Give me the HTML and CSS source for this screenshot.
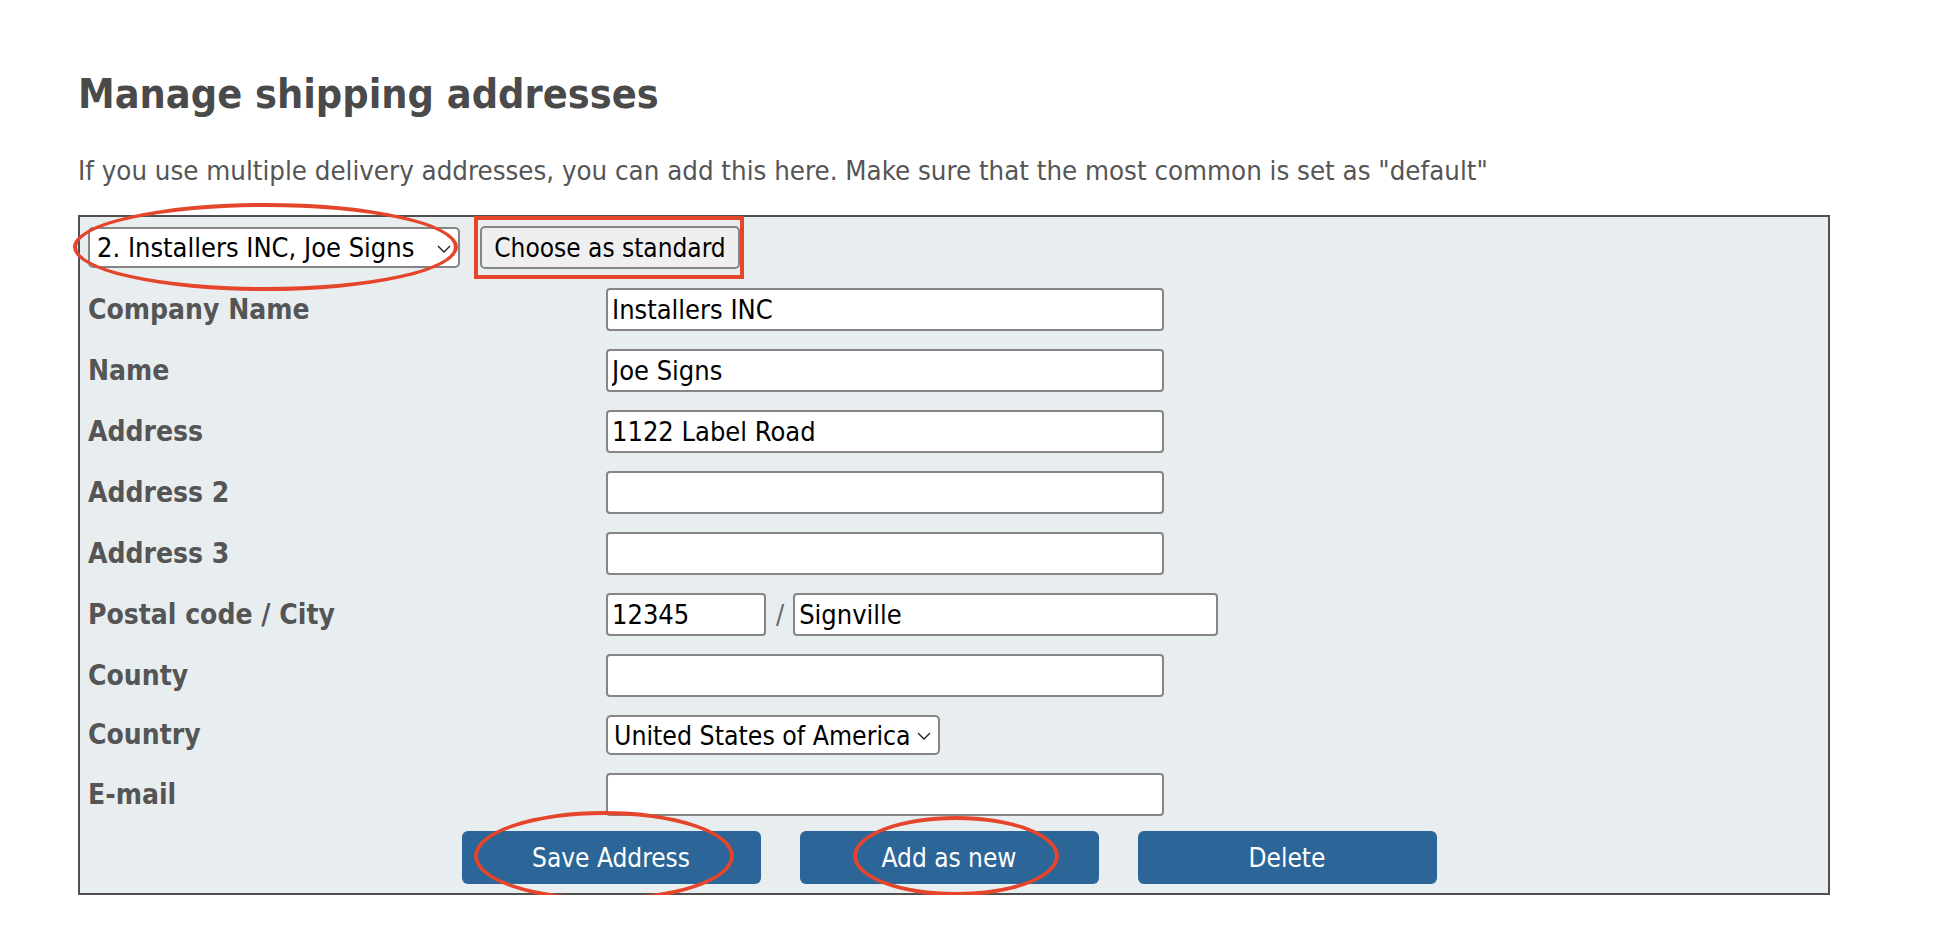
FILE: index.html
```html
<!DOCTYPE html>
<html lang="en">
<head>
<meta charset="utf-8">
<title>Manage shipping addresses</title>
<link rel="stylesheet" href="styles.css">
</head>
<body>
<div class="page">
  <h1 class="title">Manage shipping addresses</h1>
  <p class="intro">If you use multiple delivery addresses, you can add this here. Make sure that the most common is set as "default"</p>
  <form class="panel">
    <div class="toolbar">
      <div class="select-wrap select-address">
        <select class="select"><option>2. Installers INC, Joe Signs</option></select>
        <svg class="chev" viewBox="0 0 14 8" width="14" height="8"><path d="M1 1 L7 7 L13 1" fill="none" stroke="#222" stroke-width="1.4"/></svg>
      </div>
      <button type="button" class="btn-std">Choose as standard</button>
    </div>
    <div class="fields">
      <label class="lbl">Company Name</label>
      <div class="ctl"><input class="txt" type="text" value="Installers INC"></div>
      <label class="lbl">Name</label>
      <div class="ctl"><input class="txt" type="text" value="Joe Signs"></div>
      <label class="lbl">Address</label>
      <div class="ctl"><input class="txt" type="text" value="1122 Label Road"></div>
      <label class="lbl">Address 2</label>
      <div class="ctl"><input class="txt" type="text" value=""></div>
      <label class="lbl">Address 3</label>
      <div class="ctl"><input class="txt" type="text" value=""></div>
      <label class="lbl">Postal code / City</label>
      <div class="ctl postal-row">
        <input class="txt postal" type="text" value="12345">
        <span class="slash">/</span>
        <input class="txt city" type="text" value="Signville">
      </div>
      <label class="lbl">County</label>
      <div class="ctl"><input class="txt" type="text" value=""></div>
      <label class="lbl">Country</label>
      <div class="ctl">
        <div class="select-wrap select-country">
          <select class="select"><option>United States of America</option></select>
          <svg class="chev" viewBox="0 0 14 8" width="14" height="8"><path d="M1 1 L7 7 L13 1" fill="none" stroke="#222" stroke-width="1.4"/></svg>
        </div>
      </div>
      <label class="lbl">E-mail</label>
      <div class="ctl"><input class="txt" type="text" value=""></div>
    </div>
    <div class="actions">
      <button type="button" class="btn-blue">Save Address</button>
      <button type="button" class="btn-blue">Add as new</button>
      <button type="button" class="btn-blue">Delete</button>
    </div>
  </form>
  <div class="mark ring ring-select"></div>
  <div class="mark box-std"></div>
  <div class="mark ring ring-save"></div>
  <div class="mark ring ring-add"></div>
</div>
</body>
</html>
```

FILE: styles.css
```css
html, body {
  margin: 0;
  padding: 0;
  background: #ffffff;
}

body {
  font-family: "DejaVu Sans Condensed", "DejaVu Sans", sans-serif;
  font-stretch: condensed;
  color: #555555;
}

.page {
  position: relative;
  padding: 70px 0 0 78px;
  width: 1752px;
}

.title {
  margin: 0;
  font-size: 41px;
  line-height: 48px;
  font-weight: bold;
  color: #4a4a4a;
}

.intro {
  margin: 38px 0 0;
  font-size: 27.4px;
  line-height: 30px;
  color: #555555;
}

.panel {
  margin: 29px 0 0;
  box-sizing: border-box;
  width: 1752px;
  border: 2px solid #505050;
  background: #e8edf0;
  padding: 9px 8px 9px 8px;
}

.toolbar {
  display: flex;
  align-items: center;
  gap: 20px;
  height: 43px;
}

.select-wrap {
  position: relative;
  display: inline-block;
}

.select {
  appearance: none;
  -webkit-appearance: none;
  box-sizing: border-box;
  margin: 0;
  background: #ffffff;
  border: 2px solid #858585;
  border-radius: 5px;
  font-family: inherit;
  font-stretch: condensed;
  font-size: 27px;
  color: #000000;
  padding: 0 20px 0 7px;
  outline: none;
}

.select-address .select {
  width: 372px;
  height: 41px;
}

.select-country .select {
  width: 334px;
  height: 40px;
  font-size: 26.4px;
  padding: 0 18px 0 6px;
}

.chev {
  position: absolute;
  right: 9px;
  top: 50%;
  margin-top: -3px;
}

.btn-std {
  box-sizing: border-box;
  width: 260px;
  height: 43px;
  margin: 0;
  padding: 0;
  background: #efefef;
  border: 2px solid #858585;
  border-radius: 5px;
  font-family: inherit;
  font-stretch: condensed;
  font-size: 26px;
  color: #000000;
}

.fields {
  display: grid;
  grid-template-columns: 518px 1fr;
  row-gap: 18px;
  align-items: center;
  margin-top: 19px;
}

.lbl {
  font-size: 28px;
  line-height: 30px;
  font-weight: bold;
  color: #555555;
}

.ctl {
  display: flex;
  align-items: center;
}

.txt {
  box-sizing: border-box;
  width: 558px;
  height: 43px;
  margin: 0;
  background: #ffffff;
  border: 2px solid #858585;
  border-radius: 4px;
  padding: 0 4px;
  font-family: inherit;
  font-stretch: condensed;
  font-size: 27px;
  color: #000000;
  outline: none;
}

.txt.postal {
  width: 160px;
}

.txt.city {
  width: 425px;
}

.slash {
  margin: 0 9px 0 10px;
  font-size: 27px;
  color: #666666;
}

.actions {
  display: flex;
  justify-content: center;
  gap: 39px;
  margin-top: 15px;
  padding-right: 10px;
}

.btn-blue {
  width: 299px;
  height: 53px;
  margin: 0;
  padding: 0;
  border: none;
  border-radius: 6px;
  background: #2c6597;
  color: #ffffff;
  font-family: inherit;
  font-stretch: condensed;
  font-size: 26px;
}

.mark {
  position: absolute;
  box-sizing: border-box;
  border: 4px solid #e5462b;
  pointer-events: none;
}

.ring {
  border-radius: 50%;
}

.ring-select {
  left: 73px;
  top: 203px;
  width: 385px;
  height: 88px;
}

.box-std {
  left: 474px;
  top: 216px;
  width: 270px;
  height: 63px;
}

.ring-save {
  left: 474px;
  top: 811px;
  width: 260px;
  height: 90px;
}

.ring-add {
  left: 853px;
  top: 816px;
  width: 206px;
  height: 80px;
}
```
